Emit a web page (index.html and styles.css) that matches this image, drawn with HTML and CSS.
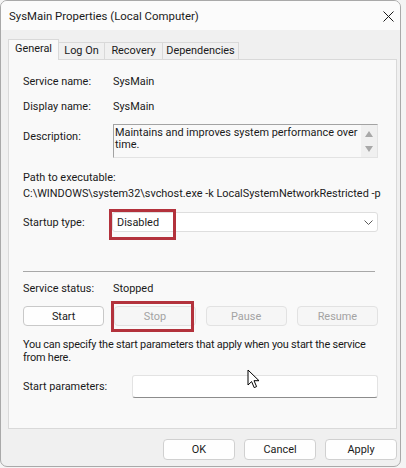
FILE: index.html
```html
<!DOCTYPE html>
<html lang="en">
<head>
  <meta charset="UTF-8" />
  <meta name="viewport" content="width=device-width, initial-scale=1.0"/>
  <title>SysMain Properties (Local Computer)</title>
  <link rel="stylesheet" href="styles.css">
</head>
<body>

  <div class="window">
    <div class="titlebar">
      <span class="title">SysMain Properties (Local Computer)</span>
      <svg class="close" width="11" height="11" viewBox="0 0 11 11">
        <path d="M0.5 0.5 L10.5 10.5 M10.5 0.5 L0.5 10.5" stroke="#1a1a1a" stroke-width="1" fill="none"/>
      </svg>
    </div>

    <div class="dialog">
      <div class="tabs">
        <div class="tab tab-general active">General</div>
        <div class="tab tab-logon">Log On</div>
        <div class="tab tab-recovery">Recovery</div>
        <div class="tab tab-deps">Dependencies</div>
      </div>

      <div class="panel">
        <div class="row">
          <span class="label">Service name:</span>
          <span>SysMain</span>
        </div>
        <div class="row">
          <span class="label">Display name:</span>
          <span>SysMain</span>
        </div>
        <div class="row desc-row">
          <span class="label">Description:</span>
          <div class="desc-box">
            <div class="desc-text">Maintains and improves system performance over time.</div>
            <div class="scrollbar">
              <svg width="8" height="6" viewBox="0 0 8 6"><path d="M0 6 L4 0 L8 6 Z" fill="#a8a8a8"/></svg>
              <svg width="8" height="6" viewBox="0 0 8 6"><path d="M0 0 L4 6 L8 0 Z" fill="#a8a8a8"/></svg>
            </div>
          </div>
        </div>

        <div class="path-label">Path to executable:</div>
        <div class="path">C:\WINDOWS\system32\svchost.exe -k LocalSystemNetworkRestricted -p</div>

        <div class="row startup-row">
          <span class="label">Startup type:</span>
          <div class="select">
            <span>Disabled</span>
            <svg width="9" height="5" viewBox="0 0 9 5"><path d="M0.5 0.5 L4.5 4.5 L8.5 0.5" stroke="#5a5a5a" fill="none"/></svg>
            <span class="highlight highlight-startup"></span>
          </div>
        </div>

        <div class="separator"></div>

        <div class="row">
          <span class="label">Service status:</span>
          <span>Stopped</span>
        </div>

        <div class="buttons">
          <button class="btn">Start</button>
          <button class="btn disabled">Stop<span class="highlight highlight-stop"></span></button>
          <button class="btn disabled">Pause</button>
          <button class="btn disabled">Resume</button>
        </div>

        <p class="hint">You can specify the start parameters that apply when you start the service from here.</p>

        <div class="row params-row">
          <span class="params-label">Start parameters:</span>
          <div class="input"></div>
          <svg class="cursor" width="14" height="20" viewBox="0 0 14 20">
            <path d="M1 1 L1 16 L4.6 12.6 L7.2 18.6 L9.6 17.6 L7 11.7 L12 11.7 Z" fill="#fff" stroke="#000" stroke-width="1" stroke-linejoin="round"/>
          </svg>
        </div>
      </div>

      <div class="footer">
        <button class="btn footer-btn">OK</button>
        <button class="btn footer-btn">Cancel</button>
        <button class="btn footer-btn">Apply</button>
      </div>
    </div>
  </div>

</body>
</html>
```

FILE: styles.css
```css
* {
  box-sizing: border-box;
  margin: 0;
  padding: 0;
}

body {
  font-family: Roboto, "Noto Sans", sans-serif;
  font-size: 10.9px;
  color: #1a1a1a;
  background-color: #f4f4f4;
  width: 406px;
  height: 468px;
  overflow: hidden;
}

.window {
  width: 401px;
  height: 467px;
  background-color: #f0f0f0;
  border: 1px solid #a9a9a9;
  border-radius: 7px;
  overflow: hidden;
}

.titlebar {
  height: 29px;
  background-color: #fbfbfb;
  display: flex;
  align-items: center;
  justify-content: space-between;
  padding: 0 6px 0 8px;
}

.title {
  font-size: 11.4px;
  color: #1a1a1a;
}

.close {
  margin-top: 1px;
}

.dialog {
  padding: 9px 3px 0 7px;
}

.tabs {
  display: flex;
  align-items: flex-end;
  height: 20px;
}

.tab {
  height: 17px;
  line-height: 15px;
  text-align: center;
  background-color: #f0f0f0;
  border: 1px solid #d9d9d9;
  border-bottom: none;
  margin-left: -1px;
}

.tab.active {
  height: 21px;
  line-height: 18px;
  background-color: #f9f9f9;
  position: relative;
  margin-bottom: -1px;
  margin-left: 0;
  z-index: 1;
}

.tab-general { width: 51px; }
.tab-logon { width: 47px; }
.tab-recovery { width: 59px; }
.tab-deps { width: 77px; }

.panel {
  height: 370px;
  background-color: #f9f9f9;
  border: 1px solid #d9d9d9;
  padding: 14px 18px 0 14px;
}

.row {
  display: flex;
  align-items: center;
  line-height: 15px;
  margin-bottom: 10px;
}

.label {
  width: 90px;
  flex-shrink: 0;
}

.desc-row {
  align-items: flex-start;
  margin-top: 1px;
  margin-bottom: 0;
}

.desc-row .label {
  padding-top: 5px;
}

.desc-box {
  flex: 1;
  height: 34px;
  display: flex;
  border: 1px solid #a3a3a3;
  border-right-color: #e3e3e3;
  border-bottom-color: #e3e3e3;
  background-color: #f9f9f9;
}

.desc-text {
  flex: 1;
  line-height: 12px;
  padding: 2px 0 0 1px;
}

.scrollbar {
  width: 16px;
  background-color: #f0f0f0;
  display: flex;
  flex-direction: column;
  align-items: center;
  justify-content: space-between;
  padding: 6px 0 5px;
}

.path-label {
  line-height: 15px;
  margin-top: 12px;
}

.path {
  line-height: 15px;
  margin-top: 1px;
  white-space: nowrap;
}

.startup-row {
  margin-top: 11px;
  margin-bottom: 0;
  height: 20px;
}

.startup-row .label {
  width: 89px;
}

.select {
  flex: 1;
  height: 20px;
  background-color: #fff;
  border: 1px solid #dedede;
  border-radius: 3px;
  display: flex;
  align-items: center;
  justify-content: space-between;
  padding: 0 4px 0 4px;
  position: relative;
}

.highlight {
  position: absolute;
  border: 3px solid #b3323c;
  pointer-events: none;
}

.highlight-startup {
  left: -4px;
  top: -4px;
  width: 67px;
  height: 31px;
}

.separator {
  height: 1px;
  background-color: #a8a8a8;
  margin: 39px 3px 9px 0;
}

.buttons {
  display: flex;
  gap: 10px;
  margin-top: 1px;
}

.btn {
  font-family: inherit;
  font-size: 10.9px;
  color: #1a1a1a;
  height: 20px;
  background-color: #fefefe;
  border: 1px solid #c9c9c9;
  border-radius: 4px;
}

.buttons .btn {
  flex: 1;
  position: relative;
}

.btn.disabled {
  color: #a3a3a3;
  background-color: #f6f6f6;
  border-color: #e2e2e2;
}

.highlight-stop {
  left: -4px;
  top: -6px;
  width: 83px;
  height: 31px;
}

.hint {
  line-height: 12.5px;
  margin-top: 13px;
  letter-spacing: -0.2px;
}

.params-row {
  margin-top: 11px;
  position: relative;
}

.params-label {
  width: 109px;
  flex-shrink: 0;
}

.input {
  flex: 1;
  height: 23px;
  background-color: #fff;
  border: 1px solid #e3e3e3;
  border-bottom-color: #8c8c8c;
  border-radius: 3px;
}

.cursor {
  position: absolute;
  left: 224px;
  top: -6px;
}

.footer {
  display: flex;
  justify-content: flex-end;
  gap: 9px;
  padding: 10px 0 0;
}

.footer-btn {
  width: 72px;
  height: 21px;
  border-color: #d0d0d0;
}
```
